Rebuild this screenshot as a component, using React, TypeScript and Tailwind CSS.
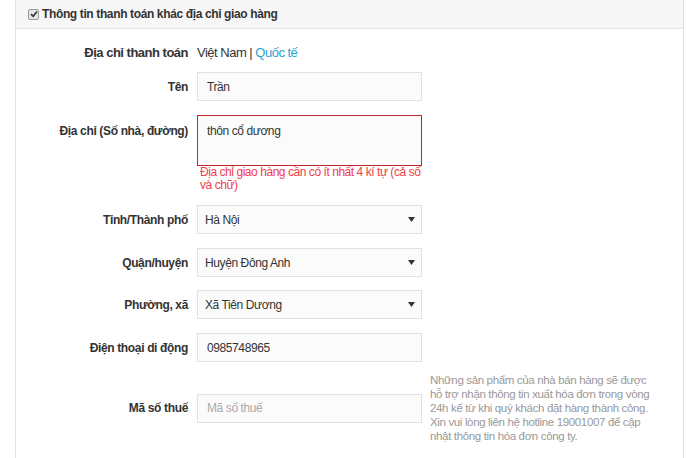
const font = { fontFamily: '"Liberation Sans", Arial, sans-serif' };

function Arrow() {
  return (
    <svg width="7" height="5" viewBox="0 0 7 5" className="shrink-0">
      <path d="M0 0 L7 0 L3.5 5 Z" fill="#333" />
    </svg>
  );
}

function Label({ children, top }: { children: React.ReactNode; top?: boolean }) {
  return (
    <div
      className={`w-[172px] shrink-0 text-right text-[12px] font-bold tracking-[-0.35px] text-[#333] ${top ? 'pt-[7px]' : ''}`}
    >
      {children}
    </div>
  );
}

function TextInput({ value, placeholder }: { value?: string; placeholder?: string }) {
  return (
    <div className="w-[225px] h-[29px] shrink-0 border border-[#dfe3e6] bg-[#fbfbfb] flex items-center pl-[9px] text-[12px] tracking-[-0.4px]">
      {value ? (
        <span className="text-[#333]">{value}</span>
      ) : (
        <span className="text-[#aaa]">{placeholder}</span>
      )}
    </div>
  );
}

function Select({ value }: { value: string }) {
  return (
    <div className="w-[225px] h-[29px] border border-[#dfe3e6] bg-[#fbfbfb] flex items-center justify-between pl-[7px] pr-[6px] text-[12px] tracking-[-0.4px] text-[#333]">
      <span>{value}</span>
      <Arrow />
    </div>
  );
}

export default function App() {
  return (
    <div className="w-[686px] h-[458px] bg-white overflow-hidden" style={font}>
      <div className="ml-[15px] w-[669px] h-full border-x border-[#dfe3e6]">
        {/* Toggle header */}
        <div className="h-[29px] bg-[#f7f7f7] border-b border-[#dfe3e6] flex items-center pl-[12px] gap-[3px]">
          <span className="w-[11px] h-[11px] rounded-[2px] border border-[#999] bg-[#e6e6e6] flex items-center justify-center">
            <svg width="8" height="8" viewBox="0 0 8 8">
              <path d="M1 4.2 L3.2 6.3 L7 1.5" stroke="#333" strokeWidth="1.6" fill="none" />
            </svg>
          </span>
          <span className="text-[12px] font-bold tracking-[-0.37px] text-[#333]">
            Thông tin thanh toán khác địa chỉ giao hàng
          </span>
        </div>

        <div className="flex items-center h-[20px] mt-[14px] gap-[9px]">
          <div className="w-[172px] shrink-0 text-right text-[13px] font-bold tracking-[-0.5px] text-[#333]">
            Địa chỉ thanh toán
          </div>
          <div className="text-[13px] tracking-[-0.5px] text-[#333]">
            Việt Nam | <span className="text-[#2a9fd6]">Quốc tế</span>
          </div>
        </div>

        <div className="flex items-center mt-[9px] gap-[9px]">
          <Label>Tên</Label>
          <TextInput value="Trần" />
        </div>

        <div className="flex items-start mt-[14px] gap-[9px]">
          <Label top>Địa chỉ (Số nhà, đường)</Label>
          <div className="w-[225px]">
            <div className="h-[51px] border border-[#c4262e] bg-[#fbfbfb] pl-[9px] pt-[6px] text-[12px] tracking-[-0.4px] text-[#333]">
              thôn cổ dương
            </div>
            <p className="text-[12px] leading-[13px] tracking-[-0.45px] text-[#f0404a] pl-[3px]">
              Địa chỉ giao hàng cần có ít nhất 4 kí tự (cả số và chữ)
            </p>
          </div>
        </div>

        <div className="flex items-center mt-[13px] gap-[9px]">
          <Label>Tỉnh/Thành phố</Label>
          <Select value="Hà Nội" />
        </div>

        <div className="flex items-center mt-[14px] gap-[9px]">
          <Label>Quận/huyện</Label>
          <Select value="Huyện Đông Anh" />
        </div>

        <div className="flex items-center mt-[13px] gap-[9px]">
          <Label>Phường, xã</Label>
          <Select value="Xã Tiên Dương" />
        </div>

        <div className="flex items-center mt-[14px] gap-[9px]">
          <Label>Điện thoại di động</Label>
          <TextInput value="0985748965" />
        </div>

        <div className="flex items-center mt-[11px] gap-[9px]">
          <Label>Mã số thuế</Label>
          <TextInput placeholder="Mã số thuế" />
          <p className="w-[222px] ml-[-1px] text-[11.5px] leading-[14px] tracking-[-0.35px] text-[#999]">
            Những sản phẩm của nhà bán hàng sẽ được hỗ trợ nhận thông tin xuất hóa đơn trong vòng 24h kể từ khi quý
            khách đặt hàng thành công. Xin vui lòng liên hệ hotline 19001007 để cập nhật thông tin hóa đơn công ty.
          </p>
        </div>
      </div>
    </div>
  );
}
